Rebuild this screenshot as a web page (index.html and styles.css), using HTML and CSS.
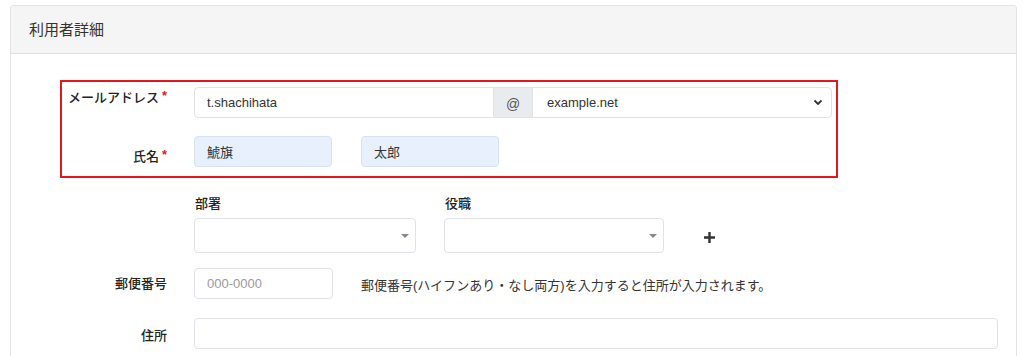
FILE: index.html
```html
<!DOCTYPE html>
<html lang="ja">
<head>
    <meta charset="UTF-8">
    <meta name="viewport" content="width=device-width, initial-scale=1.0">
    <title>利用者詳細</title>
    <link rel="stylesheet" href="styles.css">
</head>
<body>
    <div class="card">
        <div class="card-header">利用者詳細</div>
        <div class="card-body">
            <div class="highlight">
                <div class="form-row row-mail">
                    <label class="form-label">メールアドレス<span class="req">*</span></label>
                    <div class="input-group">
                        <input type="text" class="form-control mail-local" value="t.shachihata">
                        <span class="addon">@</span>
                        <div class="form-select mail-domain">
                            <span>example.net</span>
                            <svg width="10" height="7" viewBox="0 0 10 7"><path d="M1.5 1.5 5 5l3.5-3.5" fill="none" stroke="#333" stroke-width="1.8"/></svg>
                        </div>
                    </div>
                </div>
                <div class="form-row row-name">
                    <label class="form-label">氏名<span class="req">*</span></label>
                    <div class="name-fields">
                        <input type="text" class="form-control autofill" value="鯱旗">
                        <input type="text" class="form-control autofill" value="太郎">
                    </div>
                </div>
            </div>

            <div class="form-row row-dept">
                <div class="form-label"></div>
                <div class="dept-fields">
                    <div class="field dept">
                        <div class="field-title">部署</div>
                        <div class="select2"><span class="caret"></span></div>
                    </div>
                    <div class="field post">
                        <div class="field-title">役職</div>
                        <div class="select2"><span class="caret"></span></div>
                    </div>
                    <button class="add-btn" type="button">
                        <svg width="13" height="13" viewBox="0 0 13 13"><path d="M6.5 1v11M1 6.5h11" stroke="#333" stroke-width="2.4"/></svg>
                    </button>
                </div>
            </div>

            <div class="form-row row-zip">
                <label class="form-label">郵便番号</label>
                <input type="text" class="form-control zip" placeholder="000-0000">
                <span class="help">郵便番号(ハイフンあり・なし両方)を入力すると住所が入力されます。</span>
            </div>

            <div class="form-row row-addr">
                <label class="form-label">住所</label>
                <input type="text" class="form-control addr">
            </div>
        </div>
    </div>
</body>
</html>
```

FILE: styles.css
```css
body {
    margin: 0;
    background-color: #fff;
    font-family: 'Liberation Sans', 'Noto Sans CJK JP', sans-serif;
    font-size: 13px;
    color: #333;
    overflow: hidden;
}

.card {
    margin: 5px 7px 0 10px;
    border: 1px solid #e3e3e3;
    border-bottom: none;
    border-radius: 4px 4px 0 0;
    height: 350px;
}

.card-header {
    height: 47px;
    line-height: 47px;
    padding-left: 18px;
    background-color: #f5f5f5;
    border-bottom: 1px solid #dedede;
    border-radius: 4px 4px 0 0;
    font-size: 15px;
    color: #333;
}

.card-body {
    padding: 26px 18px 0 49px;
}

.highlight {
    width: 778px;
    box-sizing: border-box;
    border: 2px solid #e4161e;
    padding: 5px 0 9px;
}

.form-row {
    display: flex;
    align-items: flex-start;
}

.card-body > .form-row {
    padding-left: 2px;
}

.form-label {
    flex: 0 0 auto;
    width: 105px;
    margin-right: 27px;
    line-height: 18px;
    text-align: right;
    font-weight: 500;
    color: #222;
}

.req {
    color: #e4161e;
    margin-left: 3px;
    font-size: 13px;
    font-weight: bold;
    vertical-align: 2px;
}

.form-control {
    box-sizing: border-box;
    height: 31px;
    padding: 0 12px;
    border: 1px solid #dfe3e8;
    border-radius: 4px;
    font-family: inherit;
    font-size: 13px;
    color: #333;
    background-color: #fff;
    outline: none;
}

.form-control::placeholder {
    color: #9a9a9a;
}

.input-group {
    display: flex;
}

.mail-local {
    width: 300px;
    border-radius: 4px 0 0 4px;
}

.addon {
    width: 38px;
    height: 31px;
    box-sizing: border-box;
    display: flex;
    align-items: center;
    justify-content: center;
    background-color: #e9ecef;
    border: 1px solid #dfe3e8;
    border-left: none;
    border-right: none;
    color: #555;
    font-size: 14px;
    padding-top: 3px;
}

.form-select {
    box-sizing: border-box;
    width: 300px;
    height: 31px;
    display: flex;
    align-items: center;
    justify-content: space-between;
    padding: 0 8px 0 14px;
    border: 1px solid #dfe3e8;
    border-radius: 0 4px 4px 0;
    color: #333;
}

.row-name {
    margin-top: 18px;
}

.row-name .form-label {
    padding-top: 10px;
}

.name-fields {
    display: flex;
    gap: 29px;
}

.name-fields .form-control {
    width: 138px;
}

.autofill {
    background-color: #e8f0fe;
    border-color: #d8e1ee;
}

.row-dept {
    margin-top: 17px;
}

.dept-fields {
    display: flex;
    align-items: flex-end;
    gap: 28px;
}

.field-title {
    line-height: 18px;
    font-weight: 500;
    color: #222;
    margin-bottom: 5px;
    padding-left: 1px;
}

.select2 {
    position: relative;
    box-sizing: border-box;
    height: 35px;
    border: 1px solid #dfe3e8;
    border-radius: 4px;
    background-color: #fff;
}

.dept .select2 {
    width: 222px;
}

.post .select2 {
    width: 220px;
}

.caret {
    position: absolute;
    right: 6px;
    top: 15px;
    width: 0;
    height: 0;
    border-left: 4px solid transparent;
    border-right: 4px solid transparent;
    border-top: 4px solid #888;
}

.add-btn {
    margin: 0 0 9px 11px;
    padding: 0;
    width: 13px;
    height: 13px;
    border: none;
    background: none;
    display: flex;
    cursor: pointer;
}

.row-zip {
    margin-top: 15px;
    align-items: center;
}

.zip {
    width: 139px;
}

.help {
    margin-left: 28px;
    padding-top: 2px;
    color: #333;
}

.row-addr {
    margin-top: 19px;
}

.row-addr .form-label {
    padding-top: 9px;
}

.addr {
    flex: 1;
}
```
